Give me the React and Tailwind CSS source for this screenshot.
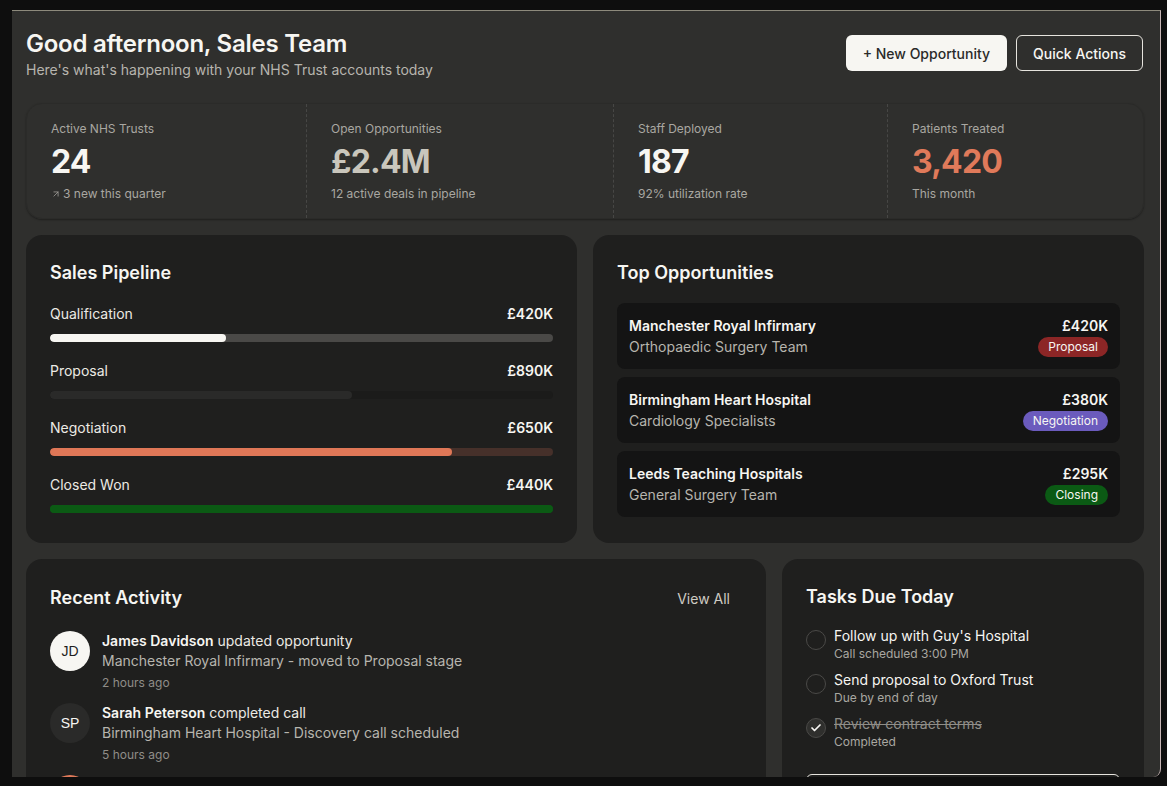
import React from "react";
import { ArrowUpRight, Check } from "lucide-react";

const stats = [
  { label: "Active NHS Trusts", value: "24", valueClass: "text-[#f7f6f2]", sub: "3 new this quarter", arrow: true },
  { label: "Open Opportunities", value: "£2.4M", valueClass: "text-[#c9c6bc]", sub: "12 active deals in pipeline" },
  { label: "Staff Deployed", value: "187", valueClass: "text-[#f7f6f2]", sub: "92% utilization rate" },
  { label: "Patients Treated", value: "3,420", valueClass: "text-[#e07a5a]", sub: "This month" },
];

const pipeline = [
  { label: "Qualification", value: "£420K", pct: 35, track: "bg-[#4a4947]", fill: "bg-[#f7f6f2]" },
  { label: "Proposal", value: "£890K", pct: 60, track: "bg-[#1b1b1a]", fill: "bg-[#2a2a29]" },
  { label: "Negotiation", value: "£650K", pct: 80, track: "bg-[#46302a]", fill: "bg-[#df7757]" },
  { label: "Closed Won", value: "£440K", pct: 100, track: "bg-[#0b5a14]", fill: "bg-[#0b5a14]" },
];

const opportunities = [
  { name: "Manchester Royal Infirmary", team: "Orthopaedic Surgery Team", value: "£420K", stage: "Proposal", badge: "bg-[#8c2626]" },
  { name: "Birmingham Heart Hospital", team: "Cardiology Specialists", value: "£380K", stage: "Negotiation", badge: "bg-[#6b5bbd]" },
  { name: "Leeds Teaching Hospitals", team: "General Surgery Team", value: "£295K", stage: "Closing", badge: "bg-[#0b5a14]" },
];

const activity = [
  { initials: "JD", avatar: "bg-[#f7f6f2] text-[#1f1f1e]", name: "James Davidson", action: "updated opportunity", detail: "Manchester Royal Infirmary - moved to Proposal stage", time: "2 hours ago" },
  { initials: "SP", avatar: "bg-[#2a2a29] text-[#f7f6f2]", name: "Sarah Peterson", action: "completed call", detail: "Birmingham Heart Hospital - Discovery call scheduled", time: "5 hours ago" },
  { initials: "EW", avatar: "bg-[#e07a5a] text-[#f7f6f2]", name: "Emma Wilson", action: "sent proposal", detail: "Leeds Teaching Hospitals - Proposal sent for review", time: "Yesterday" },
];

const tasks = [
  { title: "Follow up with Guy's Hospital", sub: "Call scheduled 3:00 PM", done: false },
  { title: "Send proposal to Oxford Trust", sub: "Due by end of day", done: false },
  { title: "Review contract terms", sub: "Completed", done: true },
];

const StatCell = ({ s, last }) => (
  <div className={`pl-6 pt-[17px] pb-[16px] ${last ? "" : "border-r border-dashed border-[#474745]"}`}>
    <div className="text-[12px] leading-4 text-[#a9a7a1]">{s.label}</div>
    <div className={`mt-[5px] text-[32px] leading-10 font-bold tracking-tight ${s.valueClass}`}>{s.value}</div>
    <div className="mt-1 flex items-center gap-[2px] text-[12px] leading-4 text-[#a9a7a1]">
      {s.arrow && <ArrowUpRight size={10} strokeWidth={1.75} />}
      {s.sub}
    </div>
  </div>
);

const App = () => {
  return (
    <div className="h-screen w-full overflow-hidden bg-[#0e0e0e] pl-[12px] pt-[10px]" style={{ fontFamily: "Inter, 'Noto Sans', sans-serif" }}>
      <div className="h-[767px] w-[1149px] overflow-hidden rounded-br-lg border-t border-r border-t-[#8d8a7c] border-r-[#c7b6b6] bg-[#2f2f2d] pl-[14px] pr-[16px] pt-[17px]">
        {/* header */}
        <div className="flex items-start justify-between">
          <div>
            <h1 className="text-[24px] leading-8 font-semibold tracking-[-0.01em] text-[#f7f6f2]">Good afternoon, Sales Team</h1>
            <p className="text-[14px] leading-5 text-[#b7b5ae]">Here's what's happening with your NHS Trust accounts today</p>
          </div>
          <div className="mt-[7px] flex items-center gap-[9px] pr-px">
            <button className="h-9 rounded-md bg-[#f7f6f2] px-[17px] text-[14px] font-medium text-[#2a2a29]">+ New Opportunity</button>
            <button className="h-9 rounded-md border border-[#e6e4de] px-4 text-[14px] font-medium text-[#f7f6f2]">Quick Actions</button>
          </div>
        </div>

        {/* stats */}
        <div className="mt-[23px] grid grid-cols-[280px_307px_274px_1fr] rounded-2xl border border-[#2b2b29] shadow-[0_1px_2px_rgba(0,0,0,0.35)]">
          {stats.map((s, i) => (
            <StatCell key={s.label} s={s} last={i === stats.length - 1} />
          ))}
        </div>

        {/* pipeline + opportunities */}
        <div className="mt-4 grid grid-cols-2 gap-4">
          <div className="rounded-2xl bg-[#1f1f1e] px-6 pt-6 pb-[30px]">
            <h2 className="text-[18px] leading-7 font-semibold text-[#f7f6f2]">Sales Pipeline</h2>
            <div className="mt-4 flex flex-col gap-[18px]">
              {pipeline.map((p) => (
                <div key={p.label}>
                  <div className="flex h-5 items-center justify-between text-[14px]">
                    <span className="text-[#eceae4]">{p.label}</span>
                    <span className="font-semibold text-[#f7f6f2]">{p.value}</span>
                  </div>
                  <div className={`mt-[11px] h-2 w-full overflow-hidden rounded-full ${p.track}`}>
                    <div className={`h-full rounded-full ${p.fill}`} style={{ width: `${p.pct}%` }} />
                  </div>
                </div>
              ))}
            </div>
          </div>

          <div className="rounded-2xl bg-[#1f1f1e] px-6 pt-6 pb-[26px]">
            <h2 className="text-[18px] leading-7 font-semibold text-[#f7f6f2]">Top Opportunities</h2>
            <div className="mt-4 flex flex-col gap-2">
              {opportunities.map((o) => (
                <div key={o.name} className="flex h-[66px] items-center justify-between rounded-lg bg-[#141414] px-3">
                  <div>
                    <div className="text-[14px] leading-5 font-semibold text-[#f7f6f2]">{o.name}</div>
                    <div className="mt-px text-[14px] leading-5 text-[#b7b5ae]">{o.team}</div>
                  </div>
                  <div className="flex flex-col items-end">
                    <div className="text-[14px] leading-5 font-semibold text-[#f7f6f2]">{o.value}</div>
                    <span className={`mt-px rounded-full px-[10px] text-[12px] leading-5 text-[#f7f6f2] ${o.badge}`}>{o.stage}</span>
                  </div>
                </div>
              ))}
            </div>
          </div>
        </div>

        {/* activity + tasks */}
        <div className="mt-4 grid grid-cols-3 gap-4">
          <div className="col-span-2 rounded-2xl bg-[#1f1f1e] px-6 pt-[25px] pb-6">
            <div className="flex items-center justify-between">
              <h2 className="text-[18px] leading-7 font-semibold text-[#f7f6f2]">Recent Activity</h2>
              <button className="pr-3 text-[14px] text-[#cfccc4]">View All</button>
            </div>
            <div className="mt-[19px] flex flex-col gap-3">
              {activity.map((a) => (
                <div key={a.initials} className="flex gap-3">
                  <div className={`flex h-10 w-10 shrink-0 items-center justify-center rounded-full text-[14px] ${a.avatar}`} style={{ fontFamily: "'Liberation Sans', Arial, sans-serif" }}>
                    {a.initials}
                  </div>
                  <div>
                    <div className="text-[14px] leading-5 text-[#eceae4]">
                      <span className="font-semibold text-[#f7f6f2]">{a.name}</span> {a.action}
                    </div>
                    <div className="text-[14px] leading-5 text-[#b7b5ae]">{a.detail}</div>
                    <div className="mt-1 text-[12px] leading-4 text-[#8f8d88]">{a.time}</div>
                  </div>
                </div>
              ))}
            </div>
          </div>

          <div className="rounded-2xl bg-[#1f1f1e] px-6 pt-6 pb-6">
            <h2 className="text-[18px] leading-7 font-semibold text-[#f7f6f2]">Tasks Due Today</h2>
            <div className="mt-[15px] flex flex-col gap-2">
              {tasks.map((t) => (
                <div key={t.title} className="flex gap-2">
                  <div className={`mt-1 flex h-5 w-5 shrink-0 items-center justify-center rounded-full border border-[#4a4947] ${t.done ? "bg-[#2f2f2d]" : ""}`}>
                    {t.done && <Check size={12} strokeWidth={3.5} className="text-[#f7f6f2]" />}
                  </div>
                  <div>
                    <div className={`text-[14px] leading-5 ${t.done ? "text-[#8f8d88] line-through" : "text-[#f7f6f2]"}`}>{t.title}</div>
                    <div className="text-[12px] leading-4 text-[#a9a7a1]">{t.sub}</div>
                  </div>
                </div>
              ))}
            </div>
            <button className="mt-6 h-9 w-full rounded-md border border-[#e6e4de] text-[14px] font-medium text-[#f7f6f2]">View All Tasks</button>
          </div>
        </div>
      </div>
    </div>
  );
};

export default App;
